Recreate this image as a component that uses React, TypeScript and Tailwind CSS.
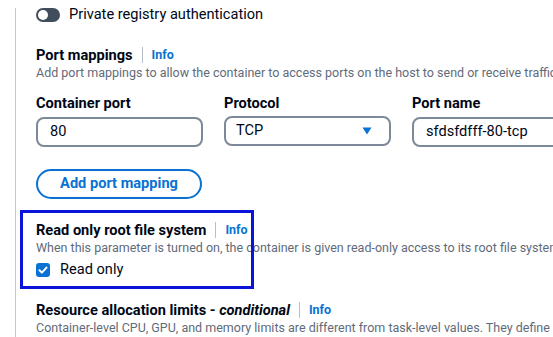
import React from 'react';

const InfoLink: React.FC = () => (
  <>
    <span className="mx-[9px] inline-block h-4 w-px bg-[#b6bec9] align-middle" />
    <a className="text-[12.5px] font-bold text-[#0972d3]">Info</a>
  </>
);

const App: React.FC = () => {
  return (
    <div className="relative h-[337px] w-[553px] overflow-hidden bg-white font-['Roboto',sans-serif] text-[#000716]">
      <div className="ml-[15px] h-full border-l border-[#c6c6cd] pl-5">
        {/* Private registry toggle */}
        <div className="mt-[8px] flex h-[14px] items-center gap-[9px]">
          <span className="flex h-[14px] w-6 items-center rounded-full bg-[#414d5c] px-[2px]">
            <span className="h-[10px] w-[10px] rounded-full bg-white" />
          </span>
          <span className="text-[14.6px]">Private registry authentication</span>
        </div>

        {/* Port mappings */}
        <div className="mt-[23px] flex items-center text-[14.6px] leading-5">
          <span className="font-bold">Port mappings</span>
          <InfoLink />
        </div>
        <p className="whitespace-nowrap text-[12.5px] leading-4 text-[#5f6b7a]">
          Add port mappings to allow the container to access ports on the host to send or receive traffic
        </p>

        <div className="mt-3 grid w-[543px] grid-cols-[167px_167px_167px] gap-x-[21px]">
          <label className="text-[14.6px] font-bold leading-5">Container port</label>
          <label className="text-[14.6px] font-bold leading-5">Protocol</label>
          <label className="text-[14.6px] font-bold leading-5">Port name</label>
          <div className="mt-[4px] flex h-[30px] items-center rounded-lg border-2 border-[#7d8998] px-3 text-[14.6px]">80</div>
          <div className="mt-[3px] flex h-[30px] items-center justify-between rounded-lg border-2 border-[#7d8998] pl-[10px] pr-[17px] text-[14.6px]">
            <span>TCP</span>
            <svg width="10" height="8" viewBox="0 0 10 8">
              <path d="M0.5 0.5h9L5 7.5z" fill="#0972d3" />
            </svg>
          </div>
          <div className="mt-[4px] flex h-[30px] items-center rounded-lg border-2 border-[#7d8998] px-3 text-[14.6px]">sfdsfdfff-80-tcp</div>
        </div>

        <button className="mt-[22px] flex h-[30px] w-[166px] items-center justify-center rounded-full border-2 border-[#0972d3] text-[14.6px] font-bold text-[#0972d3]">
          Add port mapping
        </button>

        {/* Read only root file system */}
        <div className="mt-[21px] flex items-center text-[14.6px] leading-5">
          <span className="font-bold">Read only root file system</span>
          <InfoLink />
        </div>
        <p className="whitespace-nowrap text-[12.5px] leading-4 text-[#5f6b7a]">
          When this parameter is turned on, the container is given read-only access to its root file system
        </p>
        <div className="mt-[4px] flex h-5 items-center gap-[10px] text-[14.6px]">
          <span className="flex h-[14px] w-[14px] items-center justify-center rounded-[3px] bg-[#0972d3]">
            <svg width="10" height="10" viewBox="0 0 10 10">
              <path d="M1.5 5.2l2.4 2.4 4.6-5" fill="none" stroke="white" strokeWidth="2" strokeLinecap="round" strokeLinejoin="round" />
            </svg>
          </span>
          <span>Read only</span>
        </div>

        {/* Resource allocation limits */}
        <div className="mt-[20px] flex items-center text-[14.6px] leading-5">
          <span className="font-bold">
            Resource allocation limits - <i>conditional</i>
          </span>
          <InfoLink />
        </div>
        <p className="whitespace-nowrap text-[12.5px] leading-4 text-[#5f6b7a]">
          Container-level CPU, GPU, and memory limits are different from task-level values. They define how much
        </p>
      </div>

      {/* highlight annotation */}
      <div className="pointer-events-none absolute left-[20px] top-[210px] h-[79px] w-[234px] border-[3px] border-[#0a14d8]" />
    </div>
  );
};

export default App;
